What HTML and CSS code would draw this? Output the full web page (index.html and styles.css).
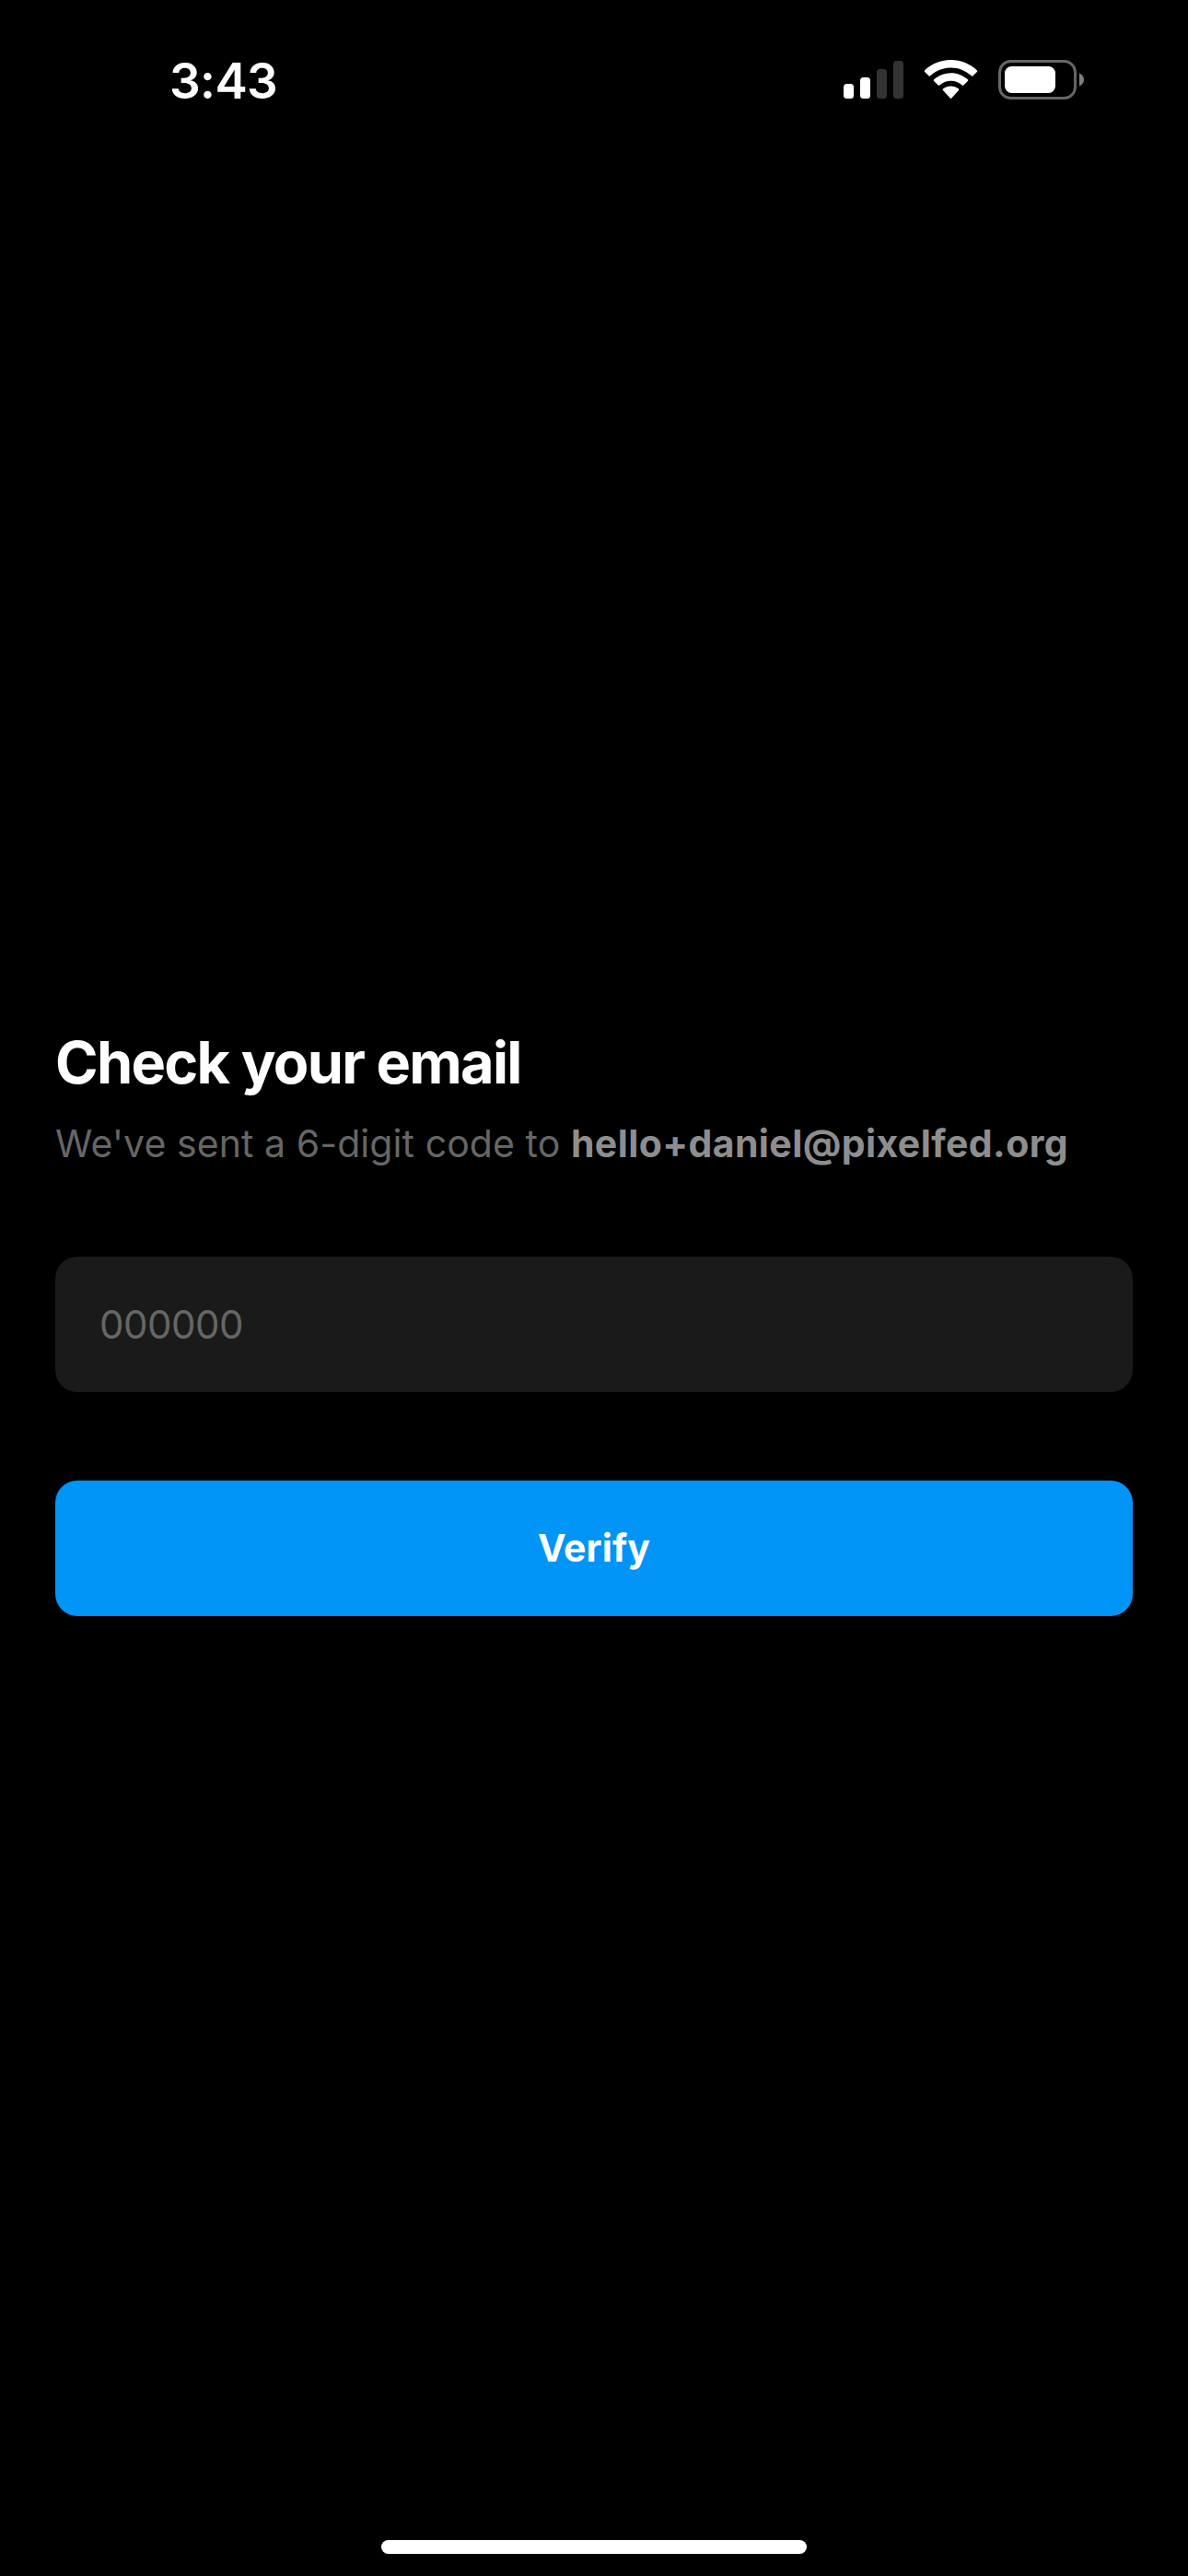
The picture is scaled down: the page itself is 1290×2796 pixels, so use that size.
FILE: index.html
```html
<!DOCTYPE html>
<html lang="en">
<head>
    <meta charset="UTF-8">
    <meta name="viewport" content="width=device-width, initial-scale=1.0">
    <title>Check your email</title>
    <link rel="stylesheet" href="styles.css">
</head>
<body>
    <div class="screen">
        <header class="status-bar">
            <span class="time">3:43</span>
            <svg class="status-icons" width="262" height="46" viewBox="0 0 262 46">
                <!-- Signal -->
                <g fill="#fff">
                    <rect x="0" y="27" width="11" height="16" rx="3.5"/>
                    <rect x="18" y="20" width="11" height="23" rx="3.5"/>
                    <rect x="36" y="11" width="11" height="32" rx="3.5" opacity="0.2"/>
                    <rect x="54" y="2" width="11" height="41" rx="3.5" opacity="0.2"/>
                </g>
                <!-- Wifi -->
                <g fill="#fff">
                    <path d="M116.500 1C127.500 1 137.500 5.300 144.800 12.300Q145.600 13.100 144.900 13.900L140.300 18.400Q139.600 19.100 138.800 18.300C133 12.800 125.200 9.400 116.500 9.400S100 12.800 94.200 18.300Q93.400 19.100 92.700 18.400L88.100 13.900Q87.400 13.100 88.200 12.300C95.500 5.300 105.500 1 116.500 1Z"/>
                    <path d="M116.500 15.200C123.600 15.200 130 17.900 134.900 22.300Q135.700 23.100 134.900 23.900L130.300 28.400Q129.500 29.100 128.700 28.400C125.400 25.500 121.200 23.700 116.500 23.700S107.600 25.500 104.300 28.400Q103.500 29.100 102.700 28.400L98.100 23.900Q97.300 23.100 98.100 22.300C103 17.900 109.400 15.200 116.500 15.200Z"/>
                    <path d="M116.500 29.400C119.700 29.400 122.600 30.500 124.900 32.300Q125.800 33.100 125 33.900L117.300 42.600Q116.500 43.400 115.700 42.600L108 33.900Q107.200 33.100 108.100 32.300C110.400 30.500 113.300 29.400 116.500 29.400Z"/>
                </g>
                <!-- Battery -->
                <rect x="169.500" y="2.500" width="82" height="40" rx="12" fill="none" stroke="#666" stroke-width="3"/>
                <rect x="175" y="8" width="55" height="29" rx="7.500" fill="#fff"/>
                <path d="M256 15.500C259 16.800 261 19.500 261 22.500S259 28.200 256 29.500Z" fill="#7f7f7f"/>
            </svg>
        </header>

        <main class="content">
            <h1>Check your email</h1>
            <p class="subtitle">We've sent a 6-digit code to <strong>hello+daniel@pixelfed.org</strong></p>
            <form class="code-form">
                <input type="text" class="input" placeholder="000000" maxlength="6">
                <button type="button" class="button">Verify</button>
            </form>
        </main>

        <div class="home-indicator"></div>
    </div>
</body>
</html>
```
FILE: styles.css
```css
* {
    box-sizing: border-box;
}

body {
    margin: 0;
    background-color: #000;
    color: #fff;
    font-family: Inter, sans-serif;
}

.screen {
    display: flex;
    flex-direction: column;
    height: 2796px;
}

.status-bar {
    display: flex;
    justify-content: space-between;
    align-items: flex-start;
    height: 177px;
    padding: 64px 112px 0 184px;
}

.time {
    font-size: 53px;
    font-weight: 600;
    line-height: 49px;
    letter-spacing: -0.6px;
}

.content {
    flex: 1;
    padding: 937px 60px 0;
}

h1 {
    margin: 0;
    font-size: 63px;
    font-weight: 700;
    line-height: 78px;
    letter-spacing: -1.7px;
}

.subtitle {
    margin: 24px 0 0;
    color: #666;
    font-size: 41px;
    line-height: 50px;
    letter-spacing: 0.07px;
    white-space: nowrap;
}

.subtitle strong {
    color: #8e8e8e;
    font-weight: 700;
    letter-spacing: 0.4px;
}

/* Verification code */
.code-form {
    display: flex;
    flex-direction: column;
    gap: 96px;
    margin-top: 98px;
}

.input,
.button {
    width: 100%;
    height: 147px;
    border: none;
    border-radius: 24px;
    font-family: inherit;
    font-size: 42px;
}

.input {
    padding: 0 48px;
    background-color: #1a1a1a;
    color: #fff;
    letter-spacing: -0.5px;
    outline: none;
}

.input::placeholder {
    color: #666;
    opacity: 1;
}

.button {
    padding: 0 0 2px;
    background-color: #0095f6;
    color: #fff;
    font-size: 41px;
    font-weight: 700;
    letter-spacing: 0.1px;
    cursor: pointer;
}

.home-indicator {
    width: 462px;
    height: 15px;
    margin: 0 auto 24px;
    border-radius: 8px;
    background-color: #fff;
}
```
